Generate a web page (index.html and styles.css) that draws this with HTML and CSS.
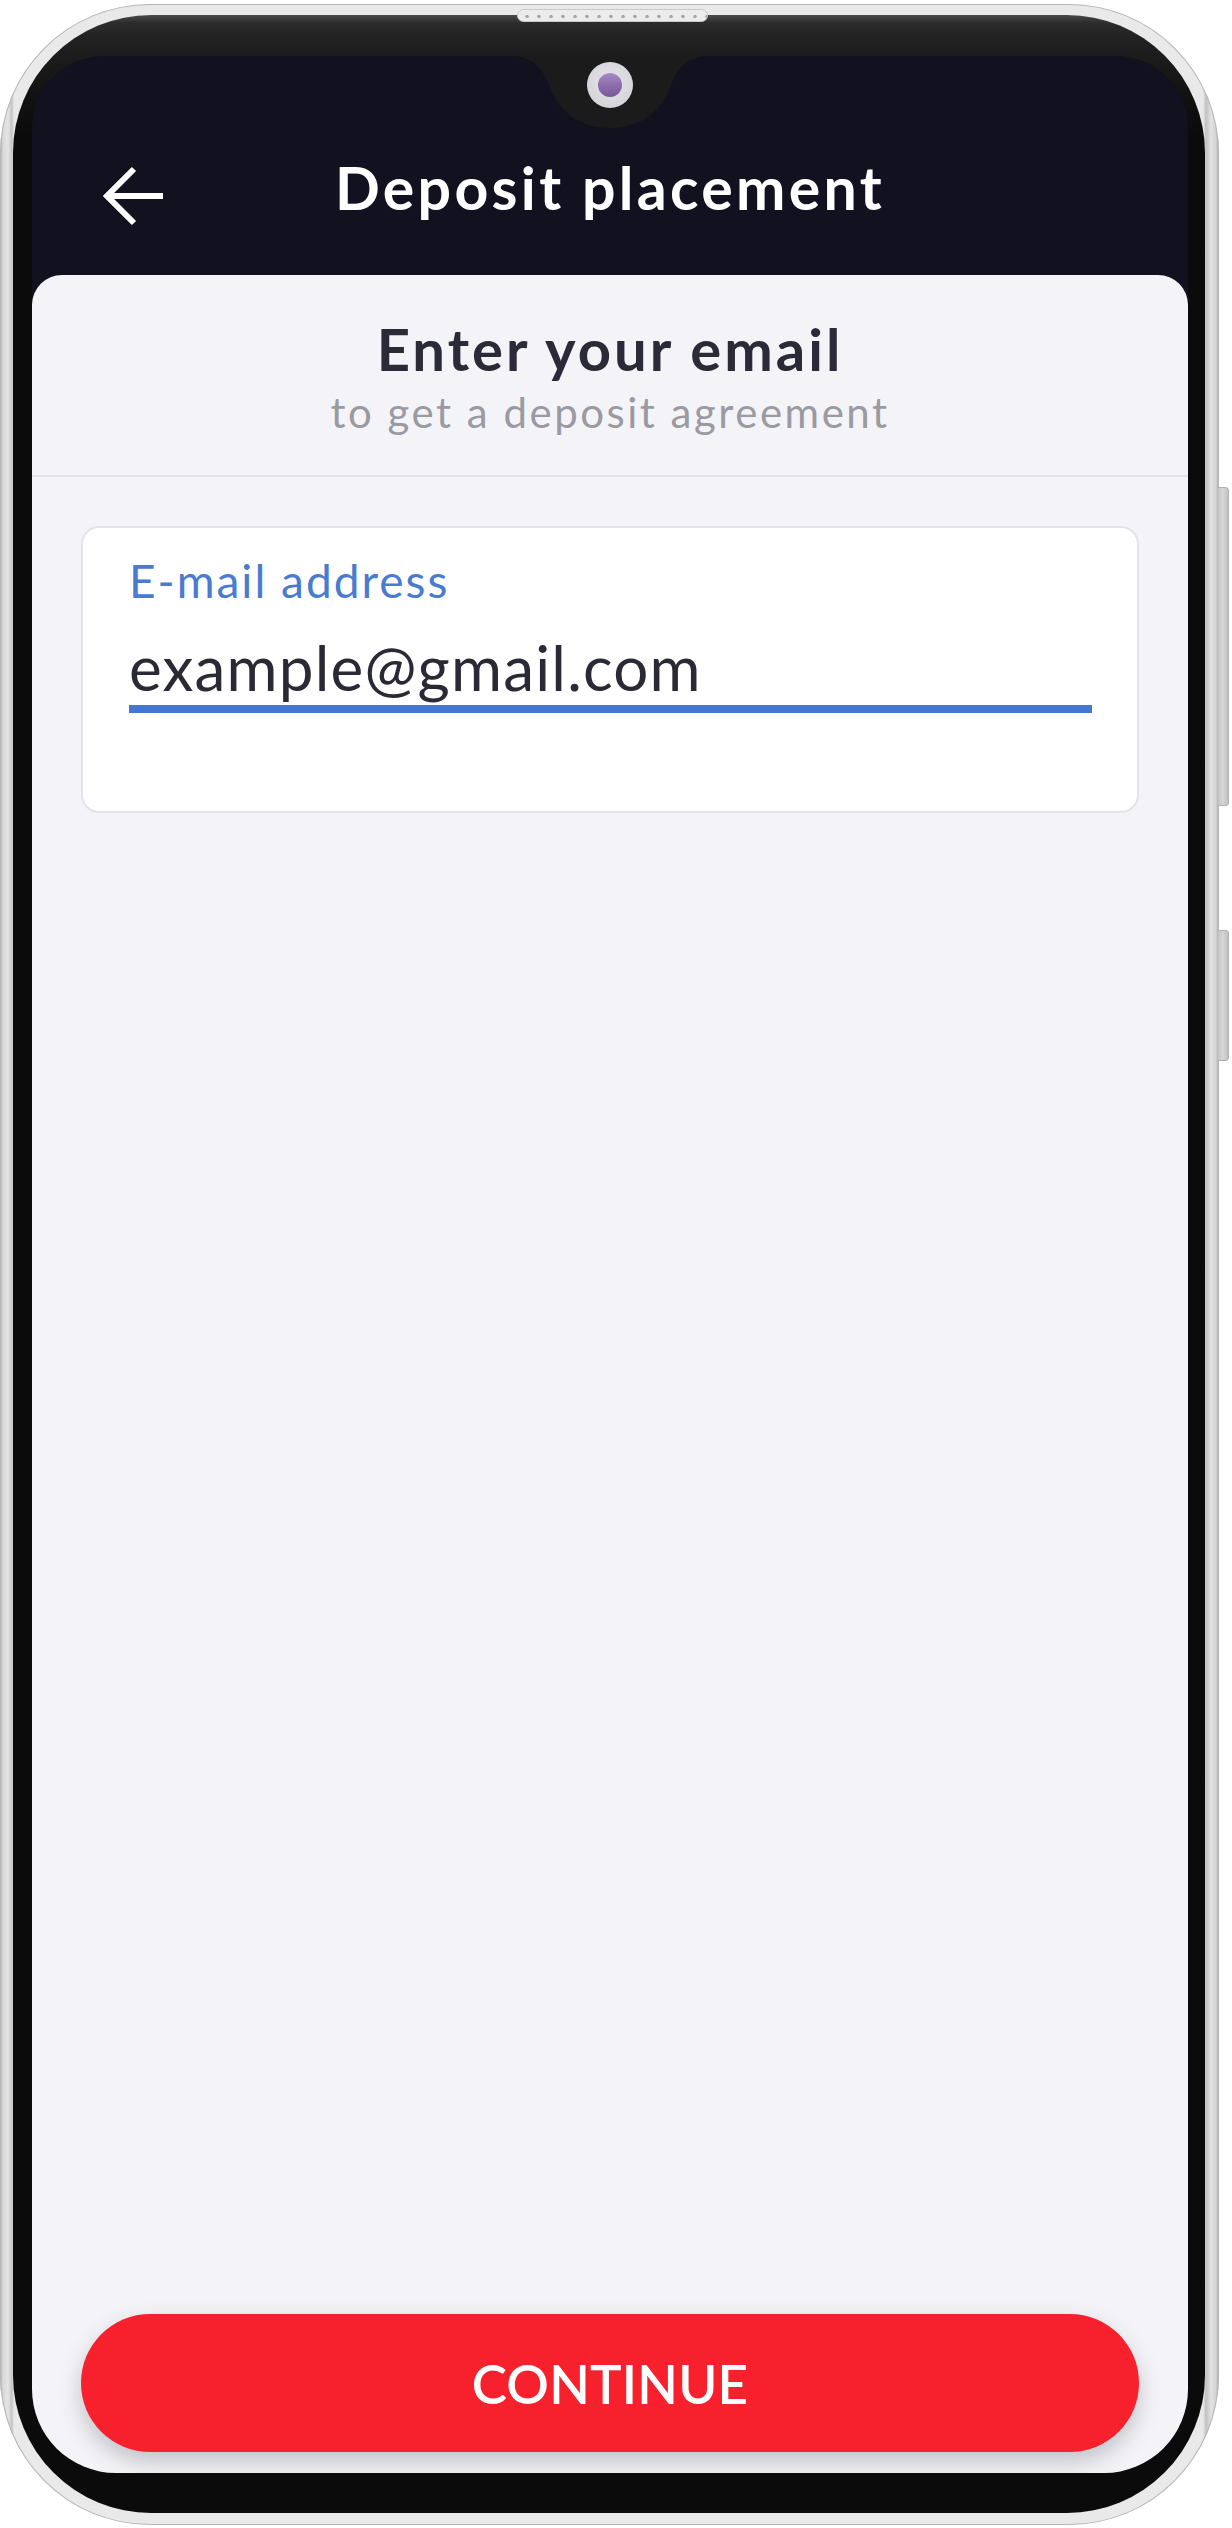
FILE: index.html
```html
<!DOCTYPE html>
<html lang="en">
<head>
<meta charset="utf-8">
<title>Deposit placement</title>
<link rel="stylesheet" href="styles.css">
</head>
<body>
<div class="device">
  <div class="side-btn vol"></div>
  <div class="side-btn power"></div>
  <div class="speaker"></div>
  <div class="bezel">
    <div class="screen">
      <div class="notch">
        <svg class="notch-shape" width="224" height="74" viewBox="0 0 224 74"><path d="M0 0 H224 C192 0 182 8 173 30 C 162 60 140 73 112 73 C 84 73 62 60 51 30 C 42 8 32 0 0 0 Z" fill="#1b1b1b"/></svg>
        <div class="camera"><div class="lens"></div></div>
      </div>
      <header class="appbar">
        <button class="back" aria-label="Back">
          <svg width="62" height="60" viewBox="0 0 62 60"><path d="M31 3 L4 30 L31 57 M4 30 H60" fill="none" stroke="#fff" stroke-width="6" stroke-linecap="butt" stroke-linejoin="miter"/></svg>
        </button>
        <h1 class="title">Deposit placement</h1>
        <span class="spacer"></span>
      </header>
      <main class="card">
        <div class="card-head">
          <h2 class="heading">Enter your email</h2>
          <p class="sub">to get a deposit agreement</p>
        </div>
        <div class="field">
          <label class="label">E-mail address</label>
          <div class="value">example@gmail.com</div>
          <div class="underline"></div>
        </div>
        <button class="continue">CONTINUE</button>
      </main>
    </div>
  </div>
</div>
</body>
</html>
```

FILE: styles.css
```css
* { box-sizing: border-box; }
html, body { margin: 0; padding: 0; background: #ffffff; }
body { width: 1232px; height: 2528px; overflow: hidden; font-family: "Lato", "Noto Sans", sans-serif; }

.device {
  position: relative;
  margin-top: 4px;
  width: 1219px;
  height: 2521px;
  border-radius: 150px;
  padding: 11px 14px 12px 13px;
  background: linear-gradient(to right, #a9a9a9 0px, #d9d9d9 3px, #e4e4e4 8px, #c4c4c4 12px, #e9e9e9 14px, #e9e9e9 1203px, #c2c2c2 1206px, #e2e2e2 1211px, #d3d3d3 1216px, #a8a8a8 1219px);
  box-shadow: inset 0 0 0 1px #b7b7b7;
}

.side-btn {
  position: absolute;
  left: 1217px;
  width: 12px;
  background: linear-gradient(to right, #bdbdbd, #d6d6d6 50%, #c2c2c2);
  border: 1px solid #b0b0b0;
  border-left: none;
  border-radius: 0 4px 4px 0;
}
.side-btn.vol { top: 483px; height: 319px; }
.side-btn.power { top: 926px; height: 131px; }

.speaker {
  position: absolute;
  left: 517px;
  top: 5px;
  width: 191px;
  height: 13px;
  border-radius: 7px;
  background-color: #ececec;
  background-image: radial-gradient(circle, #a6a6a6 1.4px, transparent 2px);
  background-size: 12px 13px;
  background-position: 3px 0;
  border: 1px solid #c9c9c9;
  z-index: 2;
}

.bezel {
  width: 1192px;
  height: 2498px;
  border-radius: 138px;
  padding: 41px 17px 40px 19px;
  background: linear-gradient(to bottom, #4a4a4a 0px, #2c2c2c 8px, #222 22px, #1c1c1c 41px, #121212 80px, #0b0b0b 120px);
}

.screen {
  position: relative;
  width: 1156px;
  height: 2417px;
  border-radius: 72px 72px 84px 84px;
  overflow: hidden;
  background: #12111f;
  display: flex;
  flex-direction: column;
}

.notch {
  position: absolute;
  left: 466px;
  top: -1px;
  width: 224px;
  height: 74px;
}
.notch-shape { display: block; }
.camera {
  position: absolute;
  left: 89px;
  top: 7px;
  width: 46px;
  height: 46px;
  border-radius: 50%;
  background: radial-gradient(circle at 50% 45%, #e6e6ea 0%, #d6d6da 70%, #c4c4c8 100%);
  display: flex;
  align-items: center;
  justify-content: center;
}
.lens {
  width: 24px;
  height: 24px;
  border-radius: 50%;
  background: linear-gradient(to bottom, #a68cc4 0%, #8b6aa9 55%, #7a5b98 100%);
}

.appbar {
  height: 219px;
  flex: none;
  display: grid;
  grid-template-columns: 1fr auto 1fr;
  align-items: center;
  padding-top: 92px;
  padding-bottom: 47px;
}
.back {
  justify-self: start;
  margin-left: 71px;
  margin-top: 15px;
  padding: 0;
  border: 0;
  background: none;
  width: 62px;
  height: 60px;
}
.back svg { display: block; }
.title {
  margin: 0;
  color: #ffffff;
  font-weight: 700;
  font-size: 59px;
  line-height: 80px;
  letter-spacing: 3.3px;
  white-space: nowrap;
}

.card {
  flex: 1;
  background: #f4f4f8;
  border-radius: 30px 30px 0 0;
  display: flex;
  flex-direction: column;
}

.card-head {
  padding-top: 39px;
  padding-bottom: 38px;
  border-bottom: 2px solid #e2e2e8;
  text-align: center;
}
.heading {
  margin: 0;
  font-size: 58px;
  line-height: 1.2;
  font-weight: 700;
  color: #2b2a37;
  letter-spacing: 3px;
}
.sub {
  margin: 3px 0 0;
  font-size: 42px;
  line-height: 1.2;
  font-weight: 400;
  color: #9a9aa2;
  letter-spacing: 2.5px;
}

.field {
  margin: 49px 49px 0 49px;
  height: 287px;
  background: #ffffff;
  border: 2px solid #e3e3e8;
  border-radius: 18px;
  padding: 25px 45px 0 46px;
}
.label {
  display: block;
  font-size: 46px;
  line-height: 1.2;
  color: #4a7bd0;
  letter-spacing: 2px;
}
.value {
  margin-top: 22px;
  font-size: 62px;
  line-height: 1.2;
  color: #2a2a35;
  letter-spacing: 1.2px;
}
.underline {
  height: 8px;
  background: #4677cf;
}

.continue {
  margin: auto 49px 21px 49px;
  height: 138px;
  border: 0;
  border-radius: 69px;
  background: #f7212e;
  color: #ffffff;
  font-family: "Lato", "Noto Sans", sans-serif;
  font-size: 53px;
  font-weight: 600;
  letter-spacing: 0.2px;
  box-shadow: 0 10px 22px rgba(60, 60, 80, 0.28);
}
```
